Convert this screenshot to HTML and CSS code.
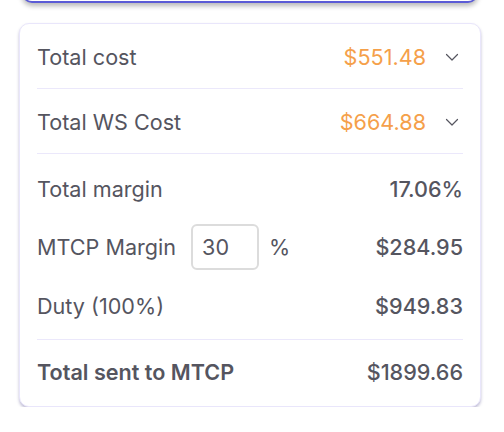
FILE: index.html
```html
<!DOCTYPE html>
<html>
<head>
<meta charset="utf-8">
<link rel="stylesheet" href="styles.css">
</head>
<body>
<div class="page">
  <div class="prev-card"></div>
  <div class="card">
    <div class="row row-acc">
      <span class="label">Total cost</span>
      <span class="right">
        <span class="value orange">$551.48</span>
        <svg class="chev" width="16" height="16" viewBox="0 0 16 16"><path d="M2.5 5.5 L8 11 L13.5 5.5" fill="none" stroke="#55555f" stroke-width="1.2" stroke-linecap="round" stroke-linejoin="round"/></svg>
      </span>
    </div>
    <div class="row row-acc">
      <span class="label">Total WS Cost</span>
      <span class="right">
        <span class="value orange">$664.88</span>
        <svg class="chev" width="16" height="16" viewBox="0 0 16 16"><path d="M2.5 5.5 L8 11 L13.5 5.5" fill="none" stroke="#55555f" stroke-width="1.2" stroke-linecap="round" stroke-linejoin="round"/></svg>
      </span>
    </div>
    <div class="section">
      <div class="row row-tall">
        <span class="label">Total margin</span>
        <span class="value">17.06%</span>
      </div>
      <div class="row row-input">
        <span class="label-group">
          <span class="label">MTCP Margin</span>
          <input class="num" type="text" value="30">
          <span class="label">%</span>
        </span>
        <span class="value">$284.95</span>
      </div>
      <div class="row row-tall">
        <span class="label">Duty (100%)</span>
        <span class="value">$949.83</span>
      </div>
    </div>
    <div class="row row-total">
      <span class="label strong">Total sent to MTCP</span>
      <span class="value">$1899.66</span>
    </div>
  </div>
</div>
</body>
</html>
```

FILE: styles.css
```css
html, body {
  margin: 0;
  padding: 0;
  background: #ffffff;
  overflow: hidden;
}
.page {
  padding: 0 23px 0 19px;
  font-family: Inter, "Noto Sans", sans-serif;
  color: #55555f;
}
.prev-card {
  height: 40px;
  margin: -40px 3px 0 3px;
  border: 1px solid #e6e3fb;
  border-bottom: 2px solid #5b5bd6;
  border-radius: 10px;
  box-shadow: 0 3px 5px rgba(0, 0, 0, 0.28);
  background: #fff;
}
.card {
  margin-top: 20px;
  border: 1px solid #e9e6fb;
  border-radius: 10px;
  background: #fff;
  padding: 0 17px 2px 17px;
  box-shadow: 0 2px 3px rgba(70, 60, 130, 0.35);
}
.row {
  display: flex;
  align-items: center;
  justify-content: space-between;
  font-size: 21.6px;
  box-sizing: border-box;
}
.row-acc {
  height: 65px;
  padding-top: 2px;
  border-bottom: 1px solid #ebe8fb;
}
.right {
  display: flex;
  align-items: center;
}
.chev {
  margin-left: 18px;
  margin-right: 3px;
}
.orange {
  color: #f5a04a;
}
.value {
  font-weight: 500;
}
.orange.value {
  font-weight: 400;
}
.section {
  border-bottom: 1px solid #ebe8fb;
}
.row-tall {
  height: 68px;
  padding-top: 1px;
}
.row-input {
  height: 49px;
}
.label-group {
  display: flex;
  align-items: center;
}
.num {
  width: 68px;
  height: 46px;
  box-sizing: border-box;
  margin: 0 10px 0 15px;
  border: 2px solid #dcdcdc;
  border-radius: 6px;
  padding: 0 0 0 9px;
  font-family: Inter, "Noto Sans", sans-serif;
  font-size: 21.6px;
  color: #55555f;
  outline: none;
  background: #fff;
}
.row-total {
  height: 64px;
}
.strong {
  font-weight: 600;
}
```
